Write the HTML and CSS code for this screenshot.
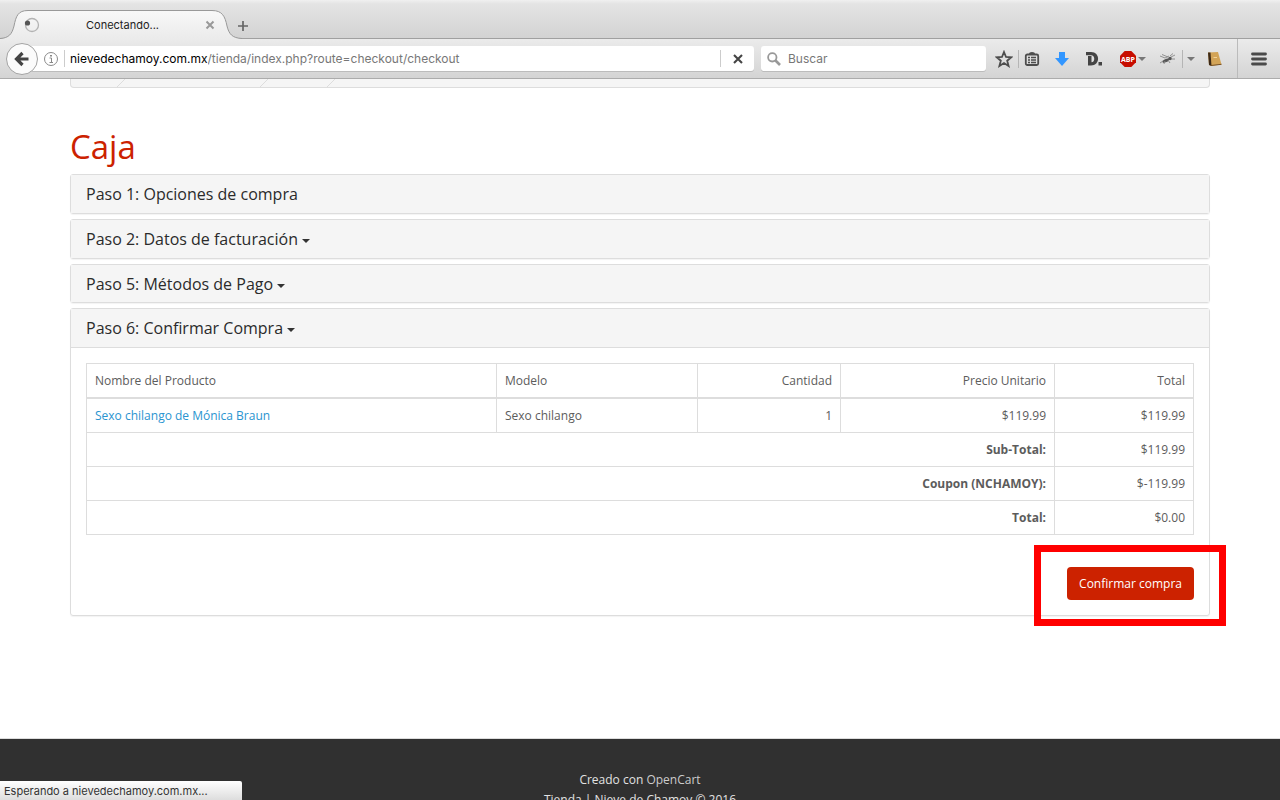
FILE: index.html
```html
<!DOCTYPE html>
<html lang="es">
<head>
<meta charset="utf-8">
<title>Caja</title>
<link rel="stylesheet" href="styles.css">
</head>
<body>
<header class="browser">
  <div class="tabs">
    <div class="tab">
      <svg class="tab-shape" width="242" height="39" viewBox="0 0 242 39"><defs><linearGradient id="tg" x1="0" y1="0" x2="0" y2="1"><stop offset="0" stop-color="#f8f8f8"/><stop offset="1" stop-color="#ebebeb"/></linearGradient></defs><path d="M0 39V38.500C9 38 12 34 14 26C16 16 18 10.500 28 10.500H212C222 10.500 225 16 227 26C229 34 232 38 242 38.500V39Z" fill="url(#tg)"/><path d="M0 38.500C9 38 12 34 14 26C16 16 18 10.500 28 10.500H212C222 10.500 225 16 227 26C229 34 232 38 242 38.500" fill="none" stroke="#999"/></svg>
      <svg class="spinner" width="16" height="16" viewBox="0 0 16 16"><circle cx="8" cy="8" r="6.500" fill="none" stroke="#b3b3b3" stroke-width="1.300"/><circle cx="3.500" cy="6" r="2.600" fill="#555"/></svg>
      <span class="tab-title">Conectando...</span>
      <button class="icon-btn" aria-label="Cerrar pestaña"><svg width="10" height="10" viewBox="0 0 10 10"><path d="M1.500 1.500L8.500 8.500M8.500 1.500L1.500 8.500" stroke="#999" stroke-width="2"/></svg></button>
    </div>
    <button class="icon-btn new-tab" aria-label="Nueva pestaña"><svg width="12" height="12" viewBox="0 0 12 12"><path d="M6 1V11M1 6H11" stroke="#666" stroke-width="1.700"/></svg></button>
  </div>
  <div class="toolbar">
    <button class="icon-btn back" aria-label="Atrás"><svg width="16" height="16" viewBox="0 0 16 16"><path d="M8.500 2L2.500 8L8.500 14M3 8H14.500" fill="none" stroke="#444" stroke-width="3.200"/></svg></button>
    <div class="field url">
      <svg class="info" width="16" height="16" viewBox="0 0 16 16"><circle cx="8" cy="8" r="6.500" fill="none" stroke="#8b8b8b"/><path d="M6.500 7H8.500V11.500M6.500 11.500H10" fill="none" stroke="#888"/><rect x="7" y="4" width="2" height="1.500" fill="#888"/></svg>
      <span class="rule"></span>
      <label class="host" for="address">nievedechamoy.com.mx</label>
      <input id="address" class="text path" type="text" value="/tienda/index.php?route=checkout/checkout">
      <span class="rule"></span>
      <button class="icon-btn stop" aria-label="Detener"><svg width="10" height="10" viewBox="0 0 10 10"><path d="M1 1L9 9M9 1L1 9" stroke="#444" stroke-width="2.100"/></svg></button>
    </div>
    <div class="field search">
      <svg width="14" height="14" viewBox="0 0 14 14"><circle cx="5.300" cy="5.300" r="4.200" fill="none" stroke="#999" stroke-width="1.800"/><path d="M8.500 8.500L13 13" stroke="#999" stroke-width="2.600"/></svg>
      <input class="text" type="text" placeholder="Buscar" aria-label="Buscar">
    </div>
    <nav class="tools" aria-label="Herramientas">
      <button class="icon-btn w18" aria-label="Marcador"><svg width="18" height="18" viewBox="0 0 18 18"><path d="M9 2L11 7L16.300 7.300L12.200 10.700L13.600 16L9 13L4.400 16L5.800 10.700L1.700 7.300L7 7Z" fill="none" stroke="#4d4d4d" stroke-width="1.800"/></svg></button>
      <span class="tool-rule"></span>
      <button class="icon-btn w18" aria-label="Lista"><svg width="16" height="16" viewBox="0 0 16 16"><rect x="1.800" y="3.500" width="12.400" height="10.500" rx="1.500" fill="none" stroke="#4d4d4d" stroke-width="1.800"/><path d="M5 3Q5 1 8 1Q11 1 11 3Z" fill="#4d4d4d"/><path d="M4 6.500H6M7 6.500H12M4 9H6M7 9H12M4 11.500H6M7 11.500H12" stroke="#4d4d4d" stroke-width="1.300"/></svg></button>
      <button class="icon-btn w18 gap-a" aria-label="Descargas"><svg width="16" height="16" viewBox="0 0 16 16"><path d="M5 1H11V7H15L8 15L1 7H5Z" fill="#3296ff"/></svg></button>
      <button class="icon-btn w18 gap-b" aria-label="Disconnect"><svg width="18" height="16" viewBox="0 0 18 16"><path fill-rule="evenodd" d="M1 1H6C15.500 1 15.500 14.500 6 14.500H3V5H6.500V11.300C10.300 11.300 10.300 4.300 6 4.300H1Z" fill="#444"/><rect x="13.500" y="11" width="3.500" height="3.500" fill="#444"/></svg></button>
      <button class="icon-btn w18 gap-c" aria-label="Adblock Plus"><svg width="18" height="18" viewBox="0 0 18 18"><path d="M5.700 1H12.300L17 5.700V12.300L12.300 17H5.700L1 12.300V5.700Z" fill="#c70d00"/><text x="9" y="12" class="abp">ABP</text></svg></button>
      <svg class="arrow" width="8" height="4" viewBox="0 0 8 4"><path d="M0 0H8L4 4Z" fill="#777"/></svg>
      <button class="icon-btn w18 gap-d" aria-label="Firebug"><svg width="18" height="16" viewBox="0 0 18 16"><ellipse cx="6.500" cy="9.500" rx="3.500" ry="1.600" transform="rotate(-25 7 9)" fill="#555"/><circle cx="11" cy="7.500" r="1.800" fill="#555"/><path d="M1 5L6 7L10 5M3 3.500L9 6M11 5L14 2.500M12 6L16 4M12 8L16 8M9 9L11 12M6 10L5 13M4 10L1 12" fill="none" stroke="#888" stroke-width=".9"/></svg></button>
      <span class="tool-rule gap-e"></span>
      <svg class="arrow gap-e" width="8" height="4" viewBox="0 0 8 4"><path d="M0 0H8L4 4Z" fill="#777"/></svg>
      <button class="icon-btn w18 gap-f" aria-label="Libro"><svg width="16" height="16" viewBox="0 0 16 16"><path d="M1 1.500L11 1L14.500 13.500L4 15L2 14Z" fill="#d3a457"/><path d="M1 1.500L3.500 1.500L4.500 15L2 14Z" fill="#3c2917"/><path d="M4 14.500L14.500 13.300" stroke="#765126"/><path d="M6.500 6.500H10" stroke="#f3d496"/></svg></button>
    </nav>
    <button class="icon-btn menu" aria-label="Menú"><svg width="16" height="14" viewBox="0 0 16 14"><path d="M1.500 2H14.500M1.500 7H14.500M1.500 12H14.500" stroke="#4a4a4a" stroke-width="2.800" stroke-linecap="round"/></svg></button>
  </div>
</header>
<div class="viewport">
  <main class="container">
    <div class="breadcrumb"><svg width="270" height="8" viewBox="0 0 270 8"><path d="M46 8L54 0M189 8L197 0M256 8L264 0" stroke="#ddd"/></svg></div>
    <h1>Caja</h1>
    <section class="panel"><h4>Paso 1: Opciones de compra</h4></section>
    <section class="panel"><h4><a href="#">Paso 2: Datos de facturación <i class="caret"></i></a></h4></section>
    <section class="panel"><h4 class="tight"><a href="#">Paso 5: Métodos de Pago <i class="caret"></i></a></h4></section>
    <section class="panel">
      <h4 class="open"><a href="#">Paso 6: Confirmar Compra <i class="caret"></i></a></h4>
      <div class="panel-body">
        <table>
          <colgroup><col><col class="c-model"><col class="c-qty"><col class="c-price"><col class="c-total"></colgroup>
          <thead><tr><th scope="col">Nombre del Producto</th><th scope="col">Modelo</th><th scope="col" class="num">Cantidad</th><th scope="col" class="num">Precio Unitario</th><th scope="col" class="num">Total</th></tr></thead>
          <tbody><tr><td><a href="#">Sexo chilango de Mónica Braun</a></td><td>Sexo chilango</td><td class="num">1</td><td class="num">$119.99</td><td class="num">$119.99</td></tr></tbody>
          <tfoot>
            <tr><td colspan="4" class="num"><strong>Sub-Total:</strong></td><td class="num">$119.99</td></tr>
            <tr><td colspan="4" class="num"><strong>Coupon (NCHAMOY):</strong></td><td class="num">$-119.99</td></tr>
            <tr><td colspan="4" class="num"><strong>Total:</strong></td><td class="num">$0.00</td></tr>
          </tfoot>
        </table>
        <div class="actions"><div class="marked"><button class="confirm">Confirmar compra</button></div></div>
      </div>
    </section>
  </main>
  <footer><p>Creado con <a href="#">OpenCart</a><br>Tienda | Nieve de Chamoy © 2016</p></footer>
  <div class="status">Esperando a nievedechamoy.com.mx...</div>
</div>
</body>
</html>
```
FILE: styles.css
```css
* { box-sizing: border-box; }
body {
  margin: 0;
  height: 100vh;
  display: flex;
  flex-direction: column;
  overflow: hidden;
  background: #fff;
  color: #5c5c5c;
  font: 400 12px/17px "Open Sans", sans-serif;
}
a { color: #2a94d0; text-decoration: none; }
svg { display: block; flex: none; }

.browser { flex: none; font-family: Inter, sans-serif; color: #333; }
.icon-btn {
  display: flex;
  flex: none;
  align-items: center;
  justify-content: center;
  padding: 0;
  border: 0;
  background: none;
}
.tabs {
  display: flex;
  height: 39px;
  border-bottom: 1px solid #a0a0a0;
  background: linear-gradient(#f0f0f0, #e4e4e4 10%, #d3d3d3);
}
.tab {
  position: relative;
  display: flex;
  align-items: center;
  width: 242px;
  height: 39px;
  padding: 11px 27px 0 24px;
}
.tab > * { position: relative; }
.tab .tab-shape { position: absolute; left: 0; top: 0; }
.tab-title { flex: 1; text-align: center; font-size: 11px; color: #222; }
.new-tab { margin-top: 13px; height: 26px; margin-left: -5px; }

.toolbar {
  display: flex;
  align-items: center;
  height: 40px;
  padding-left: 6px;
  border-bottom: 1px solid #acacac;
  background: linear-gradient(#ebebeb, #d4d4d4);
}
.back {
  z-index: 1;
  width: 32px;
  height: 32px;
  border: 1px solid #a3a3a3;
  border-radius: 50%;
  background: #fbfbfb;
}
.field {
  display: flex;
  align-items: center;
  height: 25px;
  border-radius: 3px;
  background: #fff;
  box-shadow: 0 1px 0 #bcbcbc;
  font-size: 12px;
}
.url { flex: 1; margin-left: -8px; padding-left: 13px; }
.rule { width: 1px; height: 17px; background: #ccc; }
.info { margin-right: 5px; }
.host { margin-left: 5px; color: #000; }
.text {
  flex: 1;
  min-width: 0;
  padding: 0;
  border: 0;
  outline: 0;
  background: none;
  color: #777;
  font: inherit;
}
.text::placeholder { color: #777; opacity: 1; }
.stop { width: 33px; height: 25px; }
.search { width: 225px; margin-left: 7px; padding-left: 6px; gap: 7px; }
.tools { display: flex; align-items: center; margin: 0 13px 0 9px; }
.w18 { width: 18px; height: 24px; }
.tool-rule { width: 1px; height: 18px; margin: 0 4px 0 5px; background: #b5b5b5; }
.gap-a { margin-left: 12px; }
.gap-b { margin-left: 14px; }
.gap-c { margin-left: 16px; }
.arrow { margin-left: 1px; }
.gap-d { margin-left: 13px; }
.gap-e { margin-left: 5px; }
.arrow.gap-e { margin-left: 0; }
.gap-f { margin-left: 11px; }
.abp { font: 700 7px "Open Sans", sans-serif; fill: #fff; text-anchor: middle; }
.menu { width: 43px; height: 39px; border-left: 1px solid #bbb; }

.viewport { position: relative; flex: 1; min-height: 0; overflow: hidden; }
.container { margin: 0 70px; }
.breadcrumb {
  height: 9px;
  border: 1px solid #ddd;
  border-top: 0;
  border-radius: 0 0 4px 4px;
  background: #f5f5f5;
}
h1 {
  margin: 0;
  padding: 41px 0 9px;
  color: #cc2200;
  font-size: 33px;
  font-weight: 400;
  line-height: 36px;
}
.panel {
  margin-bottom: 5px;
  border: 1px solid #ddd;
  border-radius: 3px;
  box-shadow: 0 1px 1px rgba(0, 0, 0, .05);
}
h4 {
  margin: 0;
  padding: 10px 15px;
  background: #f5f5f5;
  color: #2b2b2b;
  font-size: 16px;
  font-weight: 400;
  line-height: 18px;
}
h4 a { color: inherit; }
h4.tight { padding-bottom: 9px; }
h4.open { border-bottom: 1px solid #ddd; }
.caret {
  display: inline-block;
  vertical-align: middle;
  border-top: 4px solid #333;
  border-left: 4px solid transparent;
  border-right: 4px solid transparent;
}
.panel-body { padding: 15px; }
table { width: 100%; table-layout: fixed; border-collapse: collapse; }
.c-model { width: 201px; }
.c-qty { width: 143px; }
.c-price { width: 214px; }
.c-total { width: 139px; }
th, td { padding: 8px; border: 1px solid #ddd; text-align: left; font-weight: 400; }
th { border-bottom-width: 2px; }
.num { text-align: right; }
strong { font-weight: 700; }
.actions { display: flex; justify-content: flex-end; padding-top: 32px; }
.marked { position: relative; }
.marked::after {
  content: "";
  position: absolute;
  inset: -22px -32px -26px -33px;
  border: 7px solid #f00;
  pointer-events: none;
}
.confirm {
  display: block;
  padding: 8px 12px;
  border: 0;
  border-radius: 4px;
  background: #cc2200;
  color: #fff;
  font: 500 12px/17px "Open Sans", sans-serif;
}

footer {
  height: 200px;
  margin-top: 122px;
  padding-top: 31px;
  border-top: 1px solid #ddd;
  background: #303030;
  color: #e2e2e2;
  text-align: center;
  line-height: 20px;
}
footer p { margin: 0; }
footer a { color: #ccc; }
.status {
  position: absolute;
  left: 0;
  bottom: 0;
  width: 242px;
  height: 19px;
  padding-left: 4px;
  border-radius: 0 2px 0 0;
  background: linear-gradient(#fff, #ddd);
  color: #333;
  font: 400 11px/20px Inter, sans-serif;
}
```
